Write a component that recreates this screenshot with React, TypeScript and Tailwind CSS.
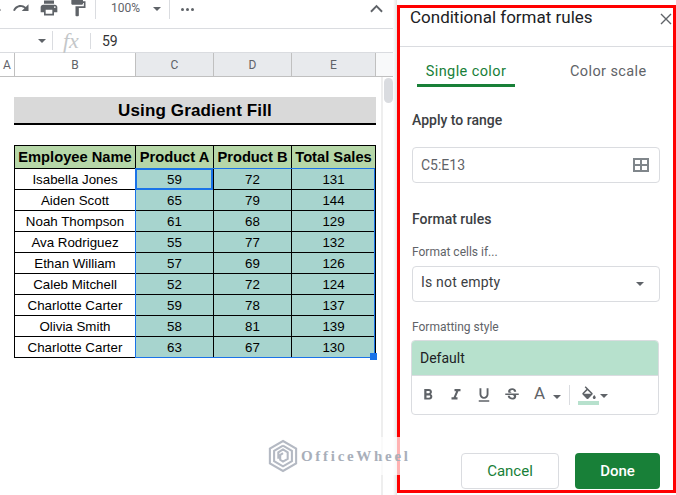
const ROWS = [
  ['Isabella Jones', 59, 72, 131],
  ['Aiden Scott', 65, 79, 144],
  ['Noah Thompson', 61, 68, 129],
  ['Ava Rodriguez', 55, 77, 132],
  ['Ethan William', 57, 69, 126],
  ['Caleb Mitchell', 52, 72, 124],
  ['Charlotte Carter', 59, 78, 137],
  ['Olivia Smith', 58, 81, 139],
  ['Charlotte Carter', 63, 67, 130],
] as const

function Icon({ d, className }: { d: string; className: string }) {
  return (
    <svg viewBox="0 0 24 24" fill="currentColor" className={className}>
      <path d={d} />
    </svg>
  )
}

function Caret({ className }: { className: string }) {
  return <div className={`border-x-[4px] border-t-[4px] border-x-transparent ${className}`} />
}

function Toolbar() {
  return (
    <div className="flex h-[29px] items-start overflow-hidden border-b border-[#dadce0] text-[#5f6368]">
      <Icon className="mt-[-1px] ml-[-16px] h-[18px] w-[18px] shrink-0" d="M12.5 8c-2.650 0-5.050.99-6.900 2.600L2 7v9h9l-3.620-3.620c1.390-1.160 3.160-1.880 5.120-1.880 3.540 0 6.550 2.310 7.600 5.500l2.370-.78C21.080 11.030 17.150 8 12.500 8z" />
      <Icon className="mt-[-1px] ml-[10px] h-[18px] w-[18px] shrink-0" d="M18.4 10.6C16.55 8.99 14.15 8 11.5 8c-4.65 0-8.58 3.03-9.96 7.22L3.9 16c1.05-3.19 4.05-5.5 7.6-5.5 1.95 0 3.73.72 5.12 1.88L13 16h9V7l-3.6 3.6z" />
      <Icon className="mt-[-2px] ml-[9px] h-[20px] w-[20px] shrink-0" d="M19 8H5c-1.66 0-3 1.34-3 3v6h4v4h12v-4h4v-6c0-1.66-1.34-3-3-3zm-3 11H8v-5h8v5zm3-7c-.55 0-1-.45-1-1s.45-1 1-1 1 .45 1 1-.45 1-1 1zm-1-9H6v4h12V3z" />
      <Icon className="mt-[-2px] ml-[9px] h-[20px] w-[20px] shrink-0" d="M18 4V3c0-.55-.45-1-1-1H5c-.55 0-1 .45-1 1v4c0 .55.45 1 1 1h12c.55 0 1-.45 1-1V6h1v4H9v11c0 .55.45 1 1 1h2c.55 0 1-.45 1-1v-9h8V4h-3z" />
      <div className="ml-[7px] h-[19px] w-px bg-[#dadce0]" />
      <span className="mt-[2px] ml-[15px] text-[12px] leading-[12px]">100%</span>
      <Caret className="mt-[7px] ml-[13px] border-t-[#5f6368]" />
      <div className="ml-[8px] h-[19px] w-px bg-[#dadce0]" />
      <div className="mt-[8px] ml-[11px] flex gap-[2px]">
        <span className="h-[3px] w-[3px] rounded-full bg-[#5f6368]" />
        <span className="h-[3px] w-[3px] rounded-full bg-[#5f6368]" />
        <span className="h-[3px] w-[3px] rounded-full bg-[#5f6368]" />
      </div>
      <svg viewBox="0 0 14 9" fill="none" stroke="#5f6368" strokeWidth="2" className="mt-[4px] ml-[176px] h-[9px] w-[13px] shrink-0">
        <path d="M1 8 7 2l6 6" />
      </svg>
    </div>
  )
}

function FormulaBar() {
  return (
    <div className="flex h-[24px] items-center border-b border-[#dadce0]">
      <Caret className="ml-[38px] border-t-[#5f6368]" />
      <div className="ml-[6px] h-[19px] w-px bg-[#dadce0]" />
      <span className="ml-[10px] w-[17px] font-['Liberation_Serif',serif] text-[22px] leading-none italic text-[#c4c7c9]">fx</span>
      <div className="ml-[10px] h-[16px] w-px bg-[#dadce0]" />
      <span className="ml-[11px] text-[14px] leading-none text-[#333]">59</span>
    </div>
  )
}

function ColumnHeaders() {
  const cell = 'flex items-center justify-center border-r border-[#c0c0c0] text-[12px] text-[#5f6368]'
  return (
    <div className="flex h-[24px] border-b border-[#c0c0c0]">
      <div className={`w-[15px] ${cell}`}>A</div>
      <div className={`w-[121px] ${cell}`}>B</div>
      <div className={`w-[78px] bg-[#e8eaed] ${cell}`}>C</div>
      <div className={`w-[78px] bg-[#e8eaed] ${cell}`}>D</div>
      <div className={`w-[84px] bg-[#e8eaed] ${cell}`}>E</div>
      <div className="flex-1 bg-[#f8f9fa]" />
    </div>
  )
}

function Sheet() {
  const th = 'border border-black bg-[#b6d7a8] p-0 text-[14.7px] leading-[18px] font-bold whitespace-nowrap'
  const td = 'border border-black p-0 pt-px leading-[17px]'
  return (
    <div className="relative flex flex-1 overflow-hidden">
      <div className="w-[382px] pt-[20px] pl-[14px] font-['Liberation_Sans',sans-serif] text-black">
        <div className="flex h-[28px] w-[362px] items-center justify-center border-b-2 border-black bg-[#d9d9d9] pt-[2px] text-[17px] leading-[20px] font-bold tracking-[0.15px]">
          Using Gradient Fill
        </div>
        <div className="relative mt-[20px] w-[361px]">
          <table className="w-full table-fixed border-collapse text-center text-[13.33px]">
            <colgroup>
              <col className="w-[121px]" />
              <col className="w-[78px]" />
              <col className="w-[78px]" />
              <col className="w-[84px]" />
            </colgroup>
            <thead>
              <tr className="h-[23px]">
                <th className={th}>Employee Name</th>
                <th className={th}>Product A</th>
                <th className={th}>Product B</th>
                <th className={th}>Total Sales</th>
              </tr>
            </thead>
            <tbody>
              {ROWS.map((row, i) => (
                <tr key={i} className="h-[21px]">
                  <td className={td}>{row[0]}</td>
                  <td className={`${td} bg-[#a7d4ce]`}>{row[1]}</td>
                  <td className={`${td} bg-[#a7d4ce]`}>{row[2]}</td>
                  <td className={`${td} bg-[#a7d4ce]`}>{row[3]}</td>
                </tr>
              ))}
            </tbody>
          </table>
          {/* selected range and active cell */}
          <div className="pointer-events-none absolute top-[23px] left-[121px] h-[190px] w-[240px] border border-[#1a73e8]" />
          <div className="pointer-events-none absolute top-[23px] left-[121px] h-[22px] w-[78px] border-2 border-[#1a73e8]" />
          <div className="absolute top-[208px] left-[356px] h-[7px] w-[7px] bg-[#1a73e8]" />
        </div>
      </div>
      <div className="flex-1 border-l-2 border-[#eeeeee] bg-white pt-px pl-px">
        <div className="h-[25px] w-[9px] rounded-full bg-[#dadce0]" />
      </div>
    </div>
  )
}

function IconBar() {
  const cls = 'h-[18px] w-[18px] shrink-0'
  return (
    <div className="flex h-[38px] items-center pl-[7px] text-[#5f6368]">
      <Icon className={cls} d="M15.6 10.79c.97-.67 1.65-1.77 1.65-2.79 0-2.26-1.75-4-4-4H7v14h7.04c2.09 0 3.71-1.7 3.71-3.79 0-1.52-.86-2.82-2.15-3.42zM10 6.5h3c.83 0 1.5.67 1.5 1.5s-.67 1.5-1.5 1.5h-3v-3zm3.5 9H10v-3h3.5c.83 0 1.5.67 1.5 1.5s-.67 1.5-1.5 1.5z" />
      <Icon className={`ml-[10px] ${cls}`} d="M10 4v3h2.21l-3.42 8H6v3h8v-3h-2.21l3.42-8H18V4z" />
      <Icon className={`ml-[10px] ${cls}`} d="M12 17c3.31 0 6-2.69 6-6V3h-2.5v8c0 1.93-1.57 3.5-3.5 3.5S8.5 12.93 8.5 11V3H6v8c0 3.31 2.69 6 6 6zm-7 2v2h14v-2H5z" />
      <Icon className={`ml-[10px] ${cls}`} d="M6.85 7.08C6.85 4.37 9.45 3 12.24 3c1.64 0 3 .49 3.9 1.28.77.65 1.46 1.73 1.46 3.24h-3.01c0-.31-.05-.59-.15-.85-.29-.86-1.2-1.28-2.25-1.28-1.86 0-2.34 1.02-2.34 1.7 0 .48.25.88.74 1.21.38.25.77.48 1.41.7H7.39c-.21-.34-.54-.89-.54-1.92zM21 12v-2H3v2h9.62c1.15.45 1.96.75 1.96 1.97 0 1-.81 1.67-2.28 1.67-1.54 0-2.93-.54-2.93-2.51H6.4c0 .55.08 1.13.24 1.58.81 2.29 3.29 3.3 5.67 3.3 2.27 0 5.3-.89 5.3-4.05 0-.3-.01-1.16-.48-1.94H21V12z" />
      <span className="mt-[-4px] ml-[13px] text-[17px] leading-none">A</span>
      <Caret className="mt-[4px] ml-[8px] border-t-[#5f6368]" />
      <div className="ml-[8px] h-[20px] w-px bg-[#dadce0]" />
      <div className="ml-[8px] flex w-[21px] flex-col items-center">
        <svg viewBox="0 0 24 18" fill="currentColor" className="h-[14px] w-[18px]">
          <path d="M16.56 8.94 7.62 0 6.21 1.41l2.38 2.38-5.15 5.15c-.59.59-.59 1.54 0 2.12l5.5 5.5c.29.29.68.44 1.06.44s.77-.15 1.06-.44l5.5-5.5c.59-.58.59-1.53 0-2.12zM5.21 10 10 5.21 14.79 10H5.21zM19 11.5s-2 2.17-2 3.500c0 1.100.9 2 2 2s2-.9 2-2c0-1.330-2-3.500-2-3.500z" />
        </svg>
        <div className="mt-[1px] h-[4px] w-[21px] bg-[#b7e1cd]" />
      </div>
      <Caret className="mt-[2px] ml-[1px] border-t-[#5f6368]" />
    </div>
  )
}

function Panel() {
  const box = 'mr-[13px] ml-[12px] flex items-center rounded border border-[#dadce0]'
  return (
    <div className="mt-[5px] mb-[2px] flex w-[279px] shrink-0 flex-col border-[3px] border-[#ff0000] bg-white">
      <div className="relative h-[39px] border-b border-[#dadce0] pl-[10px] text-[17px] leading-[18px] text-[#202124]">
        Conditional format rules
        <svg viewBox="0 0 12 12" stroke="#5f6368" strokeWidth="1.4" className="absolute top-[5px] right-[1px] h-[12px] w-[12px]">
          <path d="M1 1 11 11M11 1 1 11" />
        </svg>
      </div>
      <div className="flex h-[41px] text-[14.5px] tracking-[0.4px]">
        <div className="ml-[17px] flex h-[40px] w-[98px] items-end justify-center border-b-[3px] border-[#188038] pb-px text-[#188038]">
          Single color
        </div>
        <div className="ml-[55px] flex h-[40px] items-end pb-[4px] text-[#5f6368]">Color scale</div>
      </div>
      <div className="mt-[24px] ml-[12px] text-[14px] leading-[16px] font-medium text-[#3c4043]">Apply to range</div>
      <div className={`mt-[19px] h-[36px] justify-between pr-[10px] pl-[8px] text-[14px] text-[#5f6368] ${box}`}>
        C5:E13
        <svg viewBox="0 0 16 14" fill="none" stroke="#80868b" strokeWidth="2" className="h-[14px] w-[16px]">
          <path d="M1 1h14v12H1zM8 1v12M1 7h14" />
        </svg>
      </div>
      <div className="mt-[28px] ml-[12px] text-[14px] leading-[16px] font-medium text-[#3c4043]">Format rules</div>
      <div className="mt-[18px] ml-[12px] text-[12px] leading-[14px] text-[#5f6368]">Format cells if...</div>
      <div className={`mt-[7px] h-[36px] justify-between pr-[15px] pb-[3px] pl-[8px] text-[14px] tracking-[0.2px] text-[#3c4043] ${box}`}>
        Is not empty
        <Caret className="mt-[3px] border-t-[#5f6368]" />
      </div>
      <div className="mt-[18px] ml-[12px] text-[12px] leading-[14px] text-[#5f6368]">Formatting style</div>
      <div className="mt-[6px] mr-[14px] ml-[11px] overflow-hidden rounded border border-[#dadce0]">
        <div className="flex h-[35px] items-center border-b border-[#dadce0] bg-[#b7e1cd] pl-[8px] text-[14px] text-[#202124]">Default</div>
        <IconBar />
      </div>
      <div className="mt-[38px] mr-[13px] flex justify-end gap-[16px] text-[15px]">
        <div className="flex h-[36px] w-[98px] items-center justify-center rounded border border-[#dadce0] text-[#188038]">Cancel</div>
        <div className="flex h-[36px] w-[85px] items-center justify-center rounded bg-[#188038] font-medium text-white">Done</div>
      </div>
    </div>
  )
}

function Watermark() {
  return (
    <div className="absolute top-[437px] left-[263px] flex h-[38px] w-[150px] items-center bg-white/70 pl-[5px]">
      <svg viewBox="0 0 32 36" fill="none" stroke="#b4b9c3" strokeWidth="2.2" className="h-[34px] w-[30px] shrink-0">
        <path d="M16 2 30 10v16L16 34 2 26V10z" />
        <path d="M16 7 25.500 12.500v11L16 29 6.500 23.500v-11L16 7" />
        <path d="M11 21v-7l5-3 5 3v7l-5 3-3-2v-5l3-2" />
      </svg>
      <span className="ml-[3px] font-['Liberation_Serif',serif] text-[15px] font-bold tracking-[2.7px] text-[#a9afba]">OfficeWheel</span>
    </div>
  )
}

export default function App() {
  return (
    <div className="relative flex h-[495px] w-[676px] overflow-hidden bg-white font-['Roboto',sans-serif]">
      <div className="flex w-[393px] shrink-0 flex-col">
        <Toolbar />
        <FormulaBar />
        <ColumnHeaders />
        <Sheet />
      </div>
      <div className="w-[4px] shrink-0 bg-gradient-to-r from-white to-[#e4e4e4]" />
      <Panel />
      <Watermark />
    </div>
  )
}
